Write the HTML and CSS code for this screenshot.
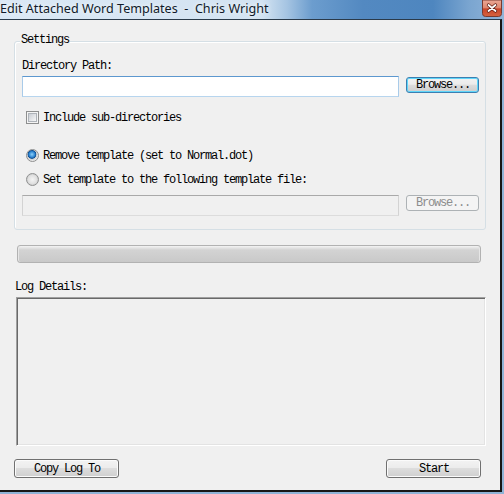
FILE: index.html
```html
<!DOCTYPE html>
<html>
<head>
<meta charset="utf-8">
<link rel="stylesheet" href="styles.css">
</head>
<body>
<div class="window">
  <div class="caption">
    <span class="caption-text">Edit Attached Word Templates  -  Chris Wright</span>
    <svg class="close-btn" width="20" height="17" viewBox="0 0 20 17">
      <defs>
        <linearGradient id="rg" x1="0" y1="0" x2="0" y2="1">
          <stop offset="0" stop-color="#eaa795"/>
          <stop offset="0.45" stop-color="#df8a72"/>
          <stop offset="0.55" stop-color="#c9452a"/>
          <stop offset="1" stop-color="#d6633f"/>
        </linearGradient>
      </defs>
      <path d="M0.5 0 V13.5 Q0.5 16.5 3.5 16.5 H16.5 Q19.5 16.5 19.5 13.5 V0 Z" fill="url(#rg)" stroke="#7a3a30" stroke-width="1"/>
      <path d="M6.5 5 L13.5 11 M13.5 5 L6.5 11" stroke="#5a1a10" stroke-width="3.2" stroke-linecap="round"/>
      <path d="M6.5 5 L13.5 11 M13.5 5 L6.5 11" stroke="#ffffff" stroke-width="1.8" stroke-linecap="round"/>
    </svg>
  </div>
  <div class="client">
    <div class="group">
      <span class="group-label">Settings</span>
      <div class="label">Directory Path:</div>
      <div class="row first">
        <div class="textbox active"></div>
        <div class="btn default">Browse...</div>
      </div>
      <div class="option check-row">
        <span class="checkbox"></span>
        <span class="opt-text">Include sub-directories</span>
      </div>
      <div class="option radio-row1">
        <span class="radio on"></span>
        <span class="opt-text">Remove template (set to Normal.dot)</span>
      </div>
      <div class="option radio-row2">
        <span class="radio"></span>
        <span class="opt-text">Set template to the following template file:</span>
      </div>
      <div class="row second">
        <div class="textbox disabled"></div>
        <div class="btn disabled">Browse...</div>
      </div>
    </div>
    <div class="progress"></div>
    <div class="log-label">Log Details:</div>
    <div class="log"></div>
    <div class="actions">
      <div class="btn copy">Copy Log To</div>
      <div class="btn start">Start</div>
    </div>
  </div>
</div>
</body>
</html>
```

FILE: styles.css
```css
* { box-sizing: border-box; }
html, body { margin: 0; padding: 0; background: #c9d9e8; }
body { width: 504px; height: 494px; overflow: hidden; }

.window {
  width: 504px;
  height: 494px;
  background: #8fb3d6;
  font-family: "Liberation Mono", monospace;
  font-size: 12px;
  letter-spacing: -1.2px;
  color: #000;
  display: flex;
  flex-direction: column;
}

.caption {
  flex: none;
  height: 19px;
  display: flex;
  justify-content: space-between;
  align-items: flex-start;
  background: linear-gradient(90deg, #dae8f5 0, #d3e3f2 262px, #a5c4e2 287px, #6c9dce 312px, #5389c1 363px, #4e86bf 433px, #7aa5d0 469px, #92b5d9 504px);
}
.caption-text {
  font-family: "Noto Sans", sans-serif;
  font-size: 12.6px;
  letter-spacing: 0;
  line-height: 17px;
  white-space: pre;
  color: #101a2a;
  text-shadow: 0 0 5px #ffffff;
}
.close-btn {
  display: block;
  flex: none;
  margin-right: 2px;
}

.client {
  width: 502px;
  height: 473px;
  flex: none;
  background: #f0f0f0;
  border-top: 1px solid #2a3a4a;
  border-right: 2px solid #161616;
  border-bottom: 2px solid #161616;
  display: flex;
  flex-direction: column;
}

.group {
  position: relative;
  margin: 21px 0 0 14px;
  width: 472px;
  height: 189px;
  flex: none;
  border: 1px solid #d5dfe5;
  border-radius: 3px;
  box-shadow: inset 1px 1px 0 #ffffff;
  padding: 18px 0 0 7px;
  display: flex;
  flex-direction: column;
}
.group-label {
  position: absolute;
  top: -8px;
  left: 5px;
  padding: 0 1px;
  line-height: 12px;
  background: #f0f0f0;
}
.label { line-height: 12px; height: 12px; }

.row {
  display: flex;
  align-items: flex-start;
  gap: 7px;
  height: 21px;
}
.row.first { margin-top: 4px; }
.row.second { margin-top: 9px; }

.textbox {
  width: 377px;
  height: 21px;
  border: 1px solid;
}
.textbox.active {
  background: #ffffff;
  border-color: #5d98cf #a9cbe9 #b7d5ee #a9cbe9;
}
.textbox.disabled {
  background: #f0f0f0;
  border-color: #a9a9a9 #d3d3d3 #dcdcdc #d3d3d3;
}

.btn {
  height: 16px;
  width: 73px;
  border: 1px solid #707070;
  border-radius: 3px;
  background: linear-gradient(#f3f3f3 0, #ececec 45%, #dddddd 50%, #cfcfcf 100%);
  box-shadow: inset 0 0 0 1px #fbfbfb;
  display: flex;
  align-items: center;
  justify-content: center;
  line-height: 12px;
  padding-left: 1px;
}
.btn.default {
  margin-top: 1px;
  border-color: #3c7fb1;
  box-shadow: inset 0 0 0 1px #5fd6fa;
  background: linear-gradient(#f2f2f2 0, #ebebeb 45%, #dcdcdc 50%, #cdcdcd 100%);
}
.btn.disabled {
  border-color: #adb2b5;
  background: #f4f4f4;
  box-shadow: none;
  color: #8d8d8d;
}

.option {
  display: flex;
  align-items: center;
  gap: 4px;
  height: 13px;
  padding-left: 4px;
}
.opt-text { line-height: 12px; }
.check-row { margin-top: 14px; }
.radio-row1 { margin-top: 25px; }
.radio-row2 { margin-top: 11px; }

.checkbox {
  width: 13px;
  height: 13px;
  flex: none;
  border: 1px solid #8e8f8f;
  background: #f4f4f4;
  box-shadow: inset 0 0 0 1px #f4f4f4, inset 0 0 0 2px #aeb3b9;
  background-image: linear-gradient(135deg, #cbcfd5 20%, #f6f6f6 80%);
  background-clip: content-box;
  padding: 2px;
}

.radio {
  width: 13px;
  height: 13px;
  flex: none;
  border-radius: 50%;
  border: 1px solid #8e8f8f;
  background: radial-gradient(circle at 50% 50%, #f4f4f4 0, #e0e0e0 55%, #cfcfcf 70%, #f6f6f6 78%);
}
.radio.on {
  background: radial-gradient(circle at 45% 40%, #8fd1f9 0, #2d85d2 32%, #0f4f93 45%, #c9cdd1 52%, #e9e9e9 70%, #f6f6f6 80%);
}

.progress {
  margin: 15px 0 0 17px;
  width: 464px;
  height: 18px;
  flex: none;
  border: 1px solid #b2b2b2;
  border-radius: 3px;
  background: linear-gradient(#f4f4f4 0, #e3e3e3 2px, #d3d3d3 4px, #c9c9c9 100%);
  box-shadow: inset 1px 0 0 #e6e6e6, inset -1px 0 0 #e6e6e6;
}

.log-label {
  margin: 18px 0 0 15px;
  line-height: 12px;
  height: 12px;
  flex: none;
}

.log {
  margin: 4px 0 0 16px;
  width: 470px;
  height: 149px;
  flex: none;
  background: #f0f0f0;
  border-top: 1px solid #a0a0a0;
  border-left: 1px solid #a0a0a0;
  border-right: 1px solid #ffffff;
  border-bottom: 1px solid #ffffff;
  box-shadow: inset 1px 1px 0 #696969, inset -1px -1px 0 #e3e3e3;
}

.actions {
  margin-top: 13px;
  display: flex;
  justify-content: space-between;
  padding: 0 19px 0 14px;
}
.btn.copy { width: 105px; height: 19px; }
.btn.start { width: 95px; height: 19px; }
```
